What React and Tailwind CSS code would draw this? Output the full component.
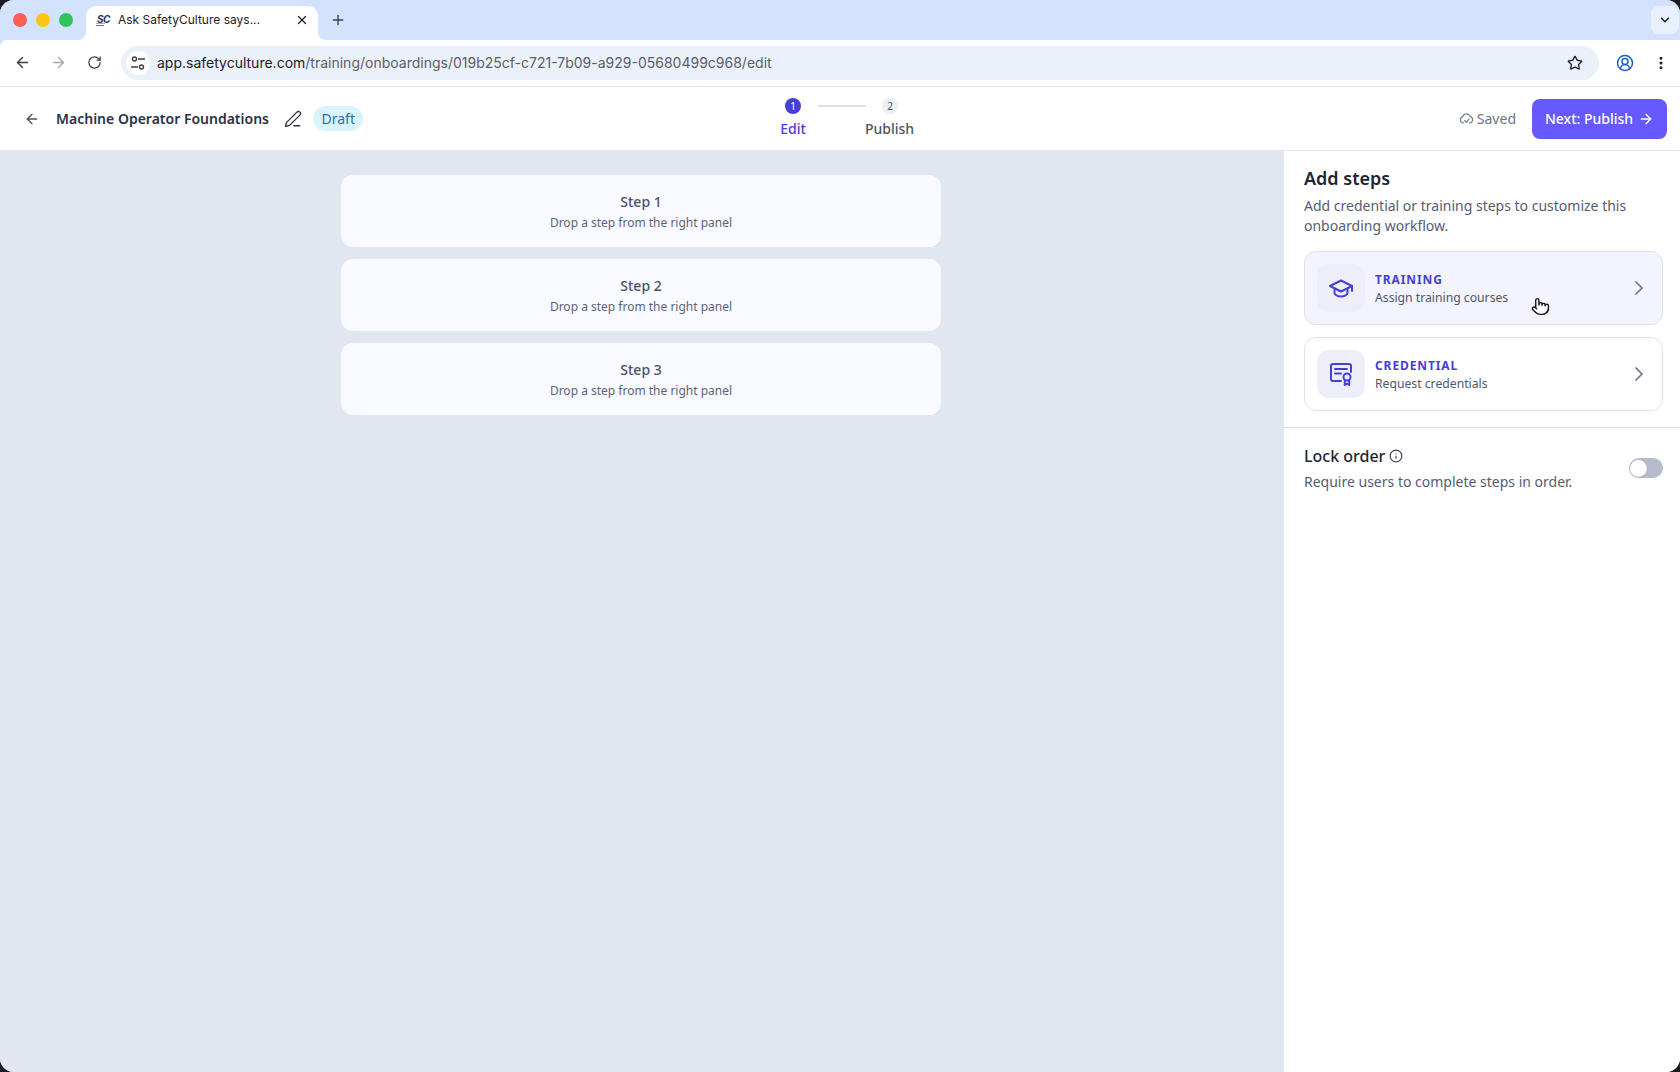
import React from "react";
import { ArrowLeft, ArrowRight, RotateCw, Star, EllipsisVertical, CircleUserRound, X, Plus, ChevronDown, ChevronRight, PenLine, Info, Pointer } from "lucide-react";

const noto = "font-['Noto_Sans',sans-serif]";

function TuneIcon() {
  return (
    <svg width="16" height="16" viewBox="0 0 16 16" fill="none" stroke="#3c4043" strokeWidth="1.4">
      <circle cx="4.5" cy="4" r="2" />
      <path d="M8 4h7" />
      <circle cx="11.5" cy="12" r="2" />
      <path d="M1 12h7" />
    </svg>
  );
}

function CloudCheckIcon() {
  return (
    <svg width="15" height="15" viewBox="0 0 24 24" fill="none" stroke="#7b8498" strokeWidth="2" strokeLinecap="round" strokeLinejoin="round">
      <path d="M7 19a5 5 0 0 1-.8-9.9 6 6 0 0 1 11.6 0A5 5 0 0 1 17 19" />
      <path d="m9 15 3 3 4-5" />
    </svg>
  );
}

function CapIcon() {
  return (
    <svg width="26" height="26" viewBox="0 0 26 26" fill="none" stroke="#4740d4" strokeWidth="2" strokeLinecap="round" strokeLinejoin="round">
      <path d="M13 5.500 24 11l-11 5.500L2 11z" />
      <path d="M6.500 13.500V18c0 1.800 3 3.500 6.500 3.500s6.500-1.700 6.500-3.500v-4.500" />
      <path d="M24 11v5" />
    </svg>
  );
}

function CredentialIcon() {
  return (
    <svg width="26" height="26" viewBox="0 0 26 26" fill="none" stroke="#4740d4" strokeWidth="2" strokeLinecap="round" strokeLinejoin="round">
      <path d="M13 20H5a2 2 0 0 1-2-2V5a2 2 0 0 1 2-2h16a2 2 0 0 1 2 2v6" />
      <path d="M7 8h12M7 12.500h6" />
      <circle cx="19" cy="16" r="3.500" />
      <path d="M16.800 19.500V24l2.200-1.400 2.200 1.400v-4.500" />
    </svg>
  );
}

function Favicon() {
  return (
    <span className="relative h-[14px] w-[16px]">
      <span className="absolute top-[1px] left-[1px] text-[10px] leading-none font-bold italic tracking-[-0.5px] text-[#26306b]">SC</span>
      <span className="absolute top-[10px] left-0 h-[1px] w-[9px] bg-[#f2a33a]" />
      <span className="absolute top-[12px] left-0 h-[1px] w-[8px] bg-[#4a6cf7]" />
    </span>
  );
}

function StepSlot({ title }) {
  return (
    <div className="flex h-[72px] flex-col items-center justify-center rounded-xl bg-[#f8faff]">
      <div className="text-[14px] leading-5 font-medium text-[#4b5366]">{title}</div>
      <div className="mt-[3px] text-[12px] leading-4 text-[#5c6478]">Drop a step from the right panel</div>
    </div>
  );
}

function StepOption({ icon, title, text, hover }) {
  return (
    <div className={`flex h-[74px] items-center rounded-xl border border-[#dde2ef] pl-3 pr-[11px] ${hover ? "bg-[#f3f4fd]" : "bg-white"}`}>
      <div className="flex h-12 w-12 items-center justify-center rounded-xl bg-[#eeeefb]">{icon}</div>
      <div className="ml-[10px] flex-1">
        <div className="text-[12px] leading-[17px] font-bold tracking-[0.9px] text-[#4740d4]">{title}</div>
        <div className="mt-[1px] text-[12.2px] leading-[17px] text-[#4f576b]">{text}</div>
      </div>
      <ChevronRight size={24} strokeWidth={1.75} className="text-[#6b7488]" />
    </div>
  );
}

export default function App() {
  return (
    <div className={`relative h-[1072px] w-[1680px] overflow-hidden bg-[#1c1c1e] ${noto}`}>
      <div className="flex h-full flex-col overflow-hidden rounded-[14px] bg-white">
        <div className="bg-[#d3e3fd]">
          {/* browser tabs */}
          <div className="flex h-10 items-end font-['Inter',sans-serif]">
            <div className="mb-[13px] ml-[13px] flex w-[73px] gap-[9px]">
              <span className="h-[14px] w-[14px] rounded-full bg-[#ff5f57]" />
              <span className="h-[14px] w-[14px] rounded-full bg-[#fdc50f]" />
              <span className="h-[14px] w-[14px] rounded-full bg-[#2fc55e]" />
            </div>
            <div className="relative flex h-[34px] w-[232px] items-center rounded-t-[10px] bg-white pr-[9px] pb-[6px] pl-[10px]">
              <span className="absolute bottom-0 -left-2 h-2 w-2 bg-white"><span className="block h-full w-full rounded-br-lg bg-[#d3e3fd]" /></span>
              <span className="absolute -right-2 bottom-0 h-2 w-2 bg-white"><span className="block h-full w-full rounded-bl-lg bg-[#d3e3fd]" /></span>
              <Favicon />
              <span className="ml-[6px] flex-1 text-[12px] text-[#1f2025]">Ask SafetyCulture says...</span>
              <X size={14} strokeWidth={2.25} className="text-[#1f2025]" />
            </div>
            <div className="mb-[12px] ml-[12px] flex-1">
              <Plus size={16} strokeWidth={2} className="text-[#3c4043]" />
            </div>
            <div className="mr-[1px] mb-[6px] flex h-[28px] w-[28px] items-center justify-center rounded-lg bg-[#e8f0fd]">
              <ChevronDown size={14} strokeWidth={2.5} className="text-[#1f2025]" />
            </div>
          </div>
          {/* browser toolbar */}
          <div className="flex h-[47px] items-center rounded-tl-[7px] border-b border-[#e3e6ee] bg-white pb-[1px] font-['Inter',sans-serif]">
            <ArrowLeft size={17} strokeWidth={2} className="ml-[14px] text-[#3c4043]" />
            <ArrowRight size={17} strokeWidth={2} className="ml-[19px] text-[#a6a9ae]" />
            <RotateCw size={15} strokeWidth={2} className="ml-[20px] text-[#3c4043]" />
            <div className="ml-[19px] flex h-[34px] w-[1478px] items-center rounded-full bg-[#ebf1fb] pr-[16px] pl-[5px]">
              <div className="flex h-6 w-6 items-center justify-center rounded-full bg-white"><TuneIcon /></div>
              <div className="ml-[7px] flex-1 text-[14px] text-[#5a5e66]"><span className="text-[#1f2025]">app.safetyculture.com</span>/training/onboardings/019b25cf-c721-7b09-a929-05680499c968/edit</div>
              <Star size={16} strokeWidth={2} className="text-[#1f2025]" />
            </div>
            <CircleUserRound size={18} strokeWidth={2} className="ml-[17px] text-[#1a5fc9]" />
            <EllipsisVertical size={16} strokeWidth={2.5} className="ml-[19px] text-[#1f2025]" />
          </div>
        </div>
        {/* page header */}
        <div className="relative flex h-[64px] items-center justify-between border-b border-[#e3e6ee] bg-white px-[13px]">
          <div className="flex items-center">
            <ArrowLeft size={16} strokeWidth={2} className="ml-[11px] text-[#4b5366]" />
            <div className="ml-[16px] text-[14px] font-semibold text-[#2b3145]">Machine Operator Foundations</div>
            <PenLine size={18} strokeWidth={1.75} className="ml-[15px] text-[#2b3145]" />
            <div className="ml-[11px] rounded-full bg-[#daf4fd] px-[8.5px] py-[2px] text-[14px] text-[#2a6cb3]">Draft</div>
          </div>
          <div className="absolute top-[11px] left-[769px] flex w-[154px] flex-col">
            <div className="flex items-center pl-[16px]">
              <span className="flex h-4 w-4 items-center justify-center rounded-full bg-[#4740d4] text-[10px] leading-none text-white">1</span>
              <span className="ml-[17px] h-[2px] w-[48px] bg-[#dde0ea]" />
              <span className="ml-[16px] flex h-4 w-4 items-center justify-center rounded-full bg-[#eceef6] text-[10px] leading-none text-[#4b5366]">2</span>
            </div>
            <div className="mt-[4px] flex text-[14px] font-medium">
              <span className="w-[48px] text-center text-[#4740d4]">Edit</span>
              <span className="ml-[48px] w-[48px] text-center whitespace-nowrap text-[#4b5366]">Publish</span>
            </div>
          </div>
          <div className="flex items-center">
            <CloudCheckIcon />
            <span className="ml-[3px] text-[14px] text-[#6b7488]">Saved</span>
            <button className="ml-[16px] flex h-10 w-[135px] items-center justify-center gap-[5px] rounded-lg bg-[#6559ff] text-[14px] font-medium text-white">
              Next: Publish <ArrowRight size={16} strokeWidth={2} />
            </button>
          </div>
        </div>
        {/* main */}
        <div className="flex min-h-0 flex-1">
          <div className="flex-1 bg-[#e1e7f1] pt-[24px] pr-[2px]">
            <div className="mx-auto flex w-[600px] flex-col gap-3">
              <StepSlot title="Step 1" />
              <StepSlot title="Step 2" />
              <StepSlot title="Step 3" />
            </div>
          </div>
          <div className="w-[396px] bg-white">
            <div className="border-b border-[#d5dbea] pt-[14px] pr-[17px] pb-[16px] pl-[20px]">
              <h2 className="text-[18px] leading-[26px] font-semibold text-[#1f2533]">Add steps</h2>
              <p className="mt-[5px] text-[14px] leading-5 text-[#555d71]">Add credential or training steps to customize this onboarding workflow.</p>
              <div className="mt-[15px] flex flex-col gap-3">
                <StepOption hover icon={<CapIcon />} title="TRAINING" text="Assign training courses" />
                <StepOption icon={<CredentialIcon />} title="CREDENTIAL" text="Request credentials" />
              </div>
            </div>
            <div className="flex items-center justify-between pt-[16px] pr-[17px] pl-[20px]">
              <div>
                <div className="flex items-center gap-[4px] text-[16px] leading-6 font-medium text-[#1f2533]">
                  Lock order <Info size={14} strokeWidth={2} className="text-[#3a4154]" />
                </div>
                <div className="mt-[4px] text-[14px] leading-5 text-[#555d71]">Require users to complete steps in order.</div>
              </div>
              <div className="flex h-5 w-[34px] items-center rounded-full bg-[#b6bccb] pl-[1px]">
                <span className="h-[17px] w-[17px] rounded-full bg-white shadow-sm" />
              </div>
            </div>
          </div>
        </div>
      </div>
      {/* recorded mouse cursor */}
      <Pointer size={19} strokeWidth={1.75} fill="#ffffff" className="absolute top-[297px] left-[1531px] text-[#111111]" />
    </div>
  );
}
